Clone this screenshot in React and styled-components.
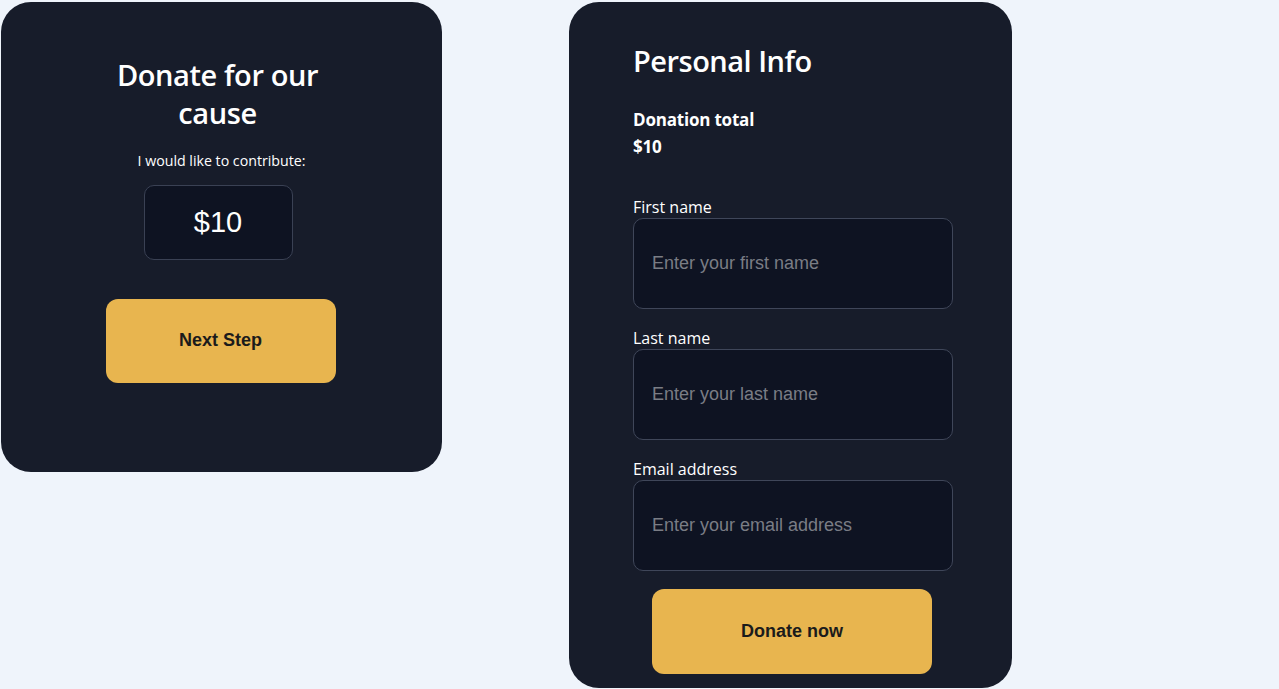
import styled, { createGlobalStyle } from "styled-components";

const GlobalStyle = createGlobalStyle`
  body {
    margin: 0;
    background: #eff4fb;
    font-family: "Open Sans", "Noto Sans", sans-serif;
  }
`;

const Page = styled.div`
  display: flex;
  align-items: flex-start;
  gap: 127px;
  padding: 2px 0 0 1px;
`;

const Card = styled.div`
  background: #171c2a;
  border-radius: 30px;
  color: #ffffff;
  box-sizing: border-box;
  display: flex;
  flex-direction: column;
`;

const AmountCard = styled(Card)`
  width: 441px;
  height: 470px;
  align-items: center;
  padding-top: 54px;
`;

const InfoCard = styled(Card)`
  width: 443px;
  height: 686px;
  padding: 37px 0 0 64px;
`;

const Title = styled.h1`
  margin: 0;
  width: 230px;
  font-size: 29px;
  font-weight: 600;
  line-height: 38px;
  letter-spacing: -0.4px;
  text-align: center;
  margin-left: -8px;
`;

const Subtitle = styled.p`
  margin: 19px 0 0;
  font-size: 14.2px;
  line-height: 20px;
`;

const AmountBox = styled.div`
  margin: 14px 0 0 -7px;
  width: 149px;
  height: 75px;
  box-sizing: border-box;
  border: 1px solid #3a4154;
  border-radius: 10px;
  background: #0e1322;
  display: flex;
  align-items: center;
  justify-content: center;
  font-family: "Liberation Sans", Arial, sans-serif;
  font-size: 29px;
`;

const Button = styled.button`
  border: none;
  background: #e8b54f;
  color: #1b1b1b;
  font-family: "Liberation Sans", Arial, sans-serif;
  font-weight: 700;
  font-size: 18px;
  border-radius: 12px;
  width: ${(p) => p.$w}px;
  height: ${(p) => p.$h}px;
  margin-top: ${(p) => p.$top}px;
  padding-bottom: 2px;
  cursor: pointer;
`;

const Heading = styled.h2`
  margin: 0;
  font-size: 29px;
  font-weight: 600;
  line-height: 44px;
  letter-spacing: -0.5px;
`;

const Total = styled.div`
  margin: 23px 0 0;
  font-size: 17px;
  font-weight: 700;
  line-height: 27px;
  letter-spacing: -0.2px;
`;

const Form = styled.form`
  margin-top: 36px;
  width: 320px;
  display: flex;
  flex-direction: column;
  align-items: stretch;
`;

const Field = styled.label`
  display: flex;
  flex-direction: column;
  font-size: 16px;
  line-height: 22px;
  margin-bottom: 18px;
`;

const Input = styled.input`
  height: 91px;
  box-sizing: border-box;
  border: 1px solid #3f4659;
  border-radius: 10px;
  background: #0e1322;
  color: #ffffff;
  padding: 0 18px;
  font-family: "Liberation Sans", Arial, sans-serif;
  font-size: 18px;
  outline: none;

  &::placeholder {
    color: #7a7d85;
  }
`;

const Center = styled.div`
  display: flex;
  justify-content: center;
  padding-right: 2px;
`;

const fields = [
  { label: "First name", placeholder: "Enter your first name", type: "text" },
  { label: "Last name", placeholder: "Enter your last name", type: "text" },
  { label: "Email address", placeholder: "Enter your email address", type: "email" },
];

export default function App() {
  return (
    <>
      <GlobalStyle />
      <Page>
        <AmountCard>
          <Title>Donate for our cause</Title>
          <Subtitle>I would like to contribute:</Subtitle>
          <AmountBox>$10</AmountBox>
          <Button $w={230} $h={84} $top={39} style={{ marginLeft: -2 }}>
            Next Step
          </Button>
        </AmountCard>

        <InfoCard>
          <Heading>Personal Info</Heading>
          <Total>
            Donation total
            <br />
            $10
          </Total>
          <Form onSubmit={(e) => e.preventDefault()}>
            {fields.map((f) => (
              <Field key={f.label}>
                {f.label}
                <Input type={f.type} placeholder={f.placeholder} />
              </Field>
            ))}
            <Center>
              <Button type="submit" $w={280} $h={85} $top={0}>
                Donate now
              </Button>
            </Center>
          </Form>
        </InfoCard>
      </Page>
    </>
  );
}
